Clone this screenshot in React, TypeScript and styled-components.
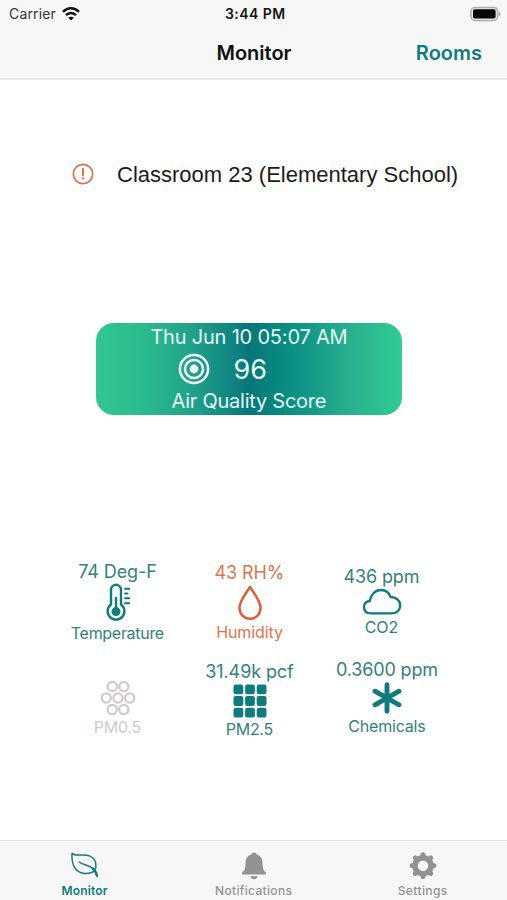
import React from 'react';
import styled, { createGlobalStyle } from 'styled-components';

const TEAL = '#107a7d';
const TEXT_TEAL = '#33817b';
const CORAL = '#dc7350';
const MUTED = '#cfcac7';
const GRAY = '#929292';

const GlobalStyle = createGlobalStyle`
  * { box-sizing: border-box; }
  body { margin: 0; background: #fff; font-family: Inter, 'Liberation Sans', sans-serif; }
  svg { display: block; flex: none; }
`;

const Screen = styled.div`
  width: 507px;
  height: 900px;
  display: flex;
  flex-direction: column;
  background: #fff;
  overflow: hidden;
`;

const Text = styled.span<{ $size: number; $track?: number; $weight?: number }>`
  font-size: ${(p) => p.$size}px;
  letter-spacing: ${(p) => p.$track ?? 0}px;
  margin-right: ${(p) => -(p.$track ?? 0)}px;
  font-weight: ${(p) => p.$weight ?? 400};
  white-space: nowrap;
`;

const Header = styled.header`
  height: 80px;
  background: #f7f7f7;
  border-bottom: 2px solid #e6e6e6;
`;

const StatusBar = styled.div`
  height: 27px;
  display: grid;
  grid-template-columns: 1fr auto 1fr;
  align-items: center;
  padding: 0 6px 0 9px;
  line-height: 27px;
  color: #161616;
`;

const Carrier = styled.div`
  display: flex;
  align-items: center;
  gap: 6px;
  color: #333;
`;

const BatterySlot = styled.div`
  display: flex;
  justify-content: flex-end;
`;

const NavBar = styled.div`
  height: 51px;
  display: grid;
  grid-template-columns: 1fr auto 1fr;
  align-items: center;
  padding: 0 25px 0 26px;
  color: #111;
`;

const RoomsButton = styled.a`
  justify-self: end;
  color: ${TEAL};
`;

const Main = styled.main`
  flex: 1;
  display: flex;
  flex-direction: column;
`;

const RoomRow = styled.div`
  margin-top: 77px;
  height: 34px;
  padding-left: 72px;
  display: flex;
  align-items: center;
  gap: 23px;
`;

const RoomName = styled(Text)`
  font-family: 'Liberation Sans', Arial, sans-serif;
  color: #1b1b1b;
  padding-top: 2px;
`;

const ScoreCard = styled.section`
  width: 306px;
  height: 92px;
  margin: 132px 0 0 96px;
  border-radius: 18px;
  background: linear-gradient(90deg, #30c690 0%, #2bbb8e 15%, #22a48b 30%, #118682 44%, #067679 50%, #099084 64%, #28ae8e 82%, #30cb94 100%);
  color: #e6f6f4;
  display: flex;
  flex-direction: column;
  align-items: center;
`;

const CardLine = styled.div`
  height: 28px;
  display: flex;
  align-items: center;
`;

const ScoreLine = styled.div`
  height: 36px;
  align-self: stretch;
  display: flex;
  align-items: center;
  gap: 24px;
  padding-left: 81.5px;
`;

const Readings = styled.section`
  margin-top: 145px;
  display: grid;
  grid-template-columns: 132px 132px 132px;
  grid-template-rows: 90px 90px;
  padding-left: 51.5px;
`;

const Tile = styled.div<{ $color: string; $top: number; $shift?: number }>`
  display: flex;
  flex-direction: column;
  align-items: center;
  padding-top: ${(p) => p.$top}px;
  padding-left: ${(p) => p.$shift ?? 0}px;
  color: ${(p) => p.$color};
`;

const Line = styled.div<{ $h: number }>`
  height: ${(p) => p.$h}px;
  display: flex;
  align-items: center;
  justify-content: center;
`;

const TabBar = styled.nav`
  height: 60px;
  background: #f7f7f7;
  border-top: 1px solid #dedede;
  display: grid;
  grid-template-columns: repeat(3, 1fr);
`;

const Tab = styled.a<{ $active?: boolean }>`
  display: flex;
  flex-direction: column;
  align-items: center;
  padding-top: 9px;
  color: ${(p) => (p.$active ? TEAL : GRAY)};
`;

const TabLabel = styled(Text)`
  line-height: 16px;
  margin-top: 3px;
`;

const Wifi = () => (
  <svg width="18" height="14" viewBox="0 0 18 14" fill="none" stroke="#111" strokeWidth="2.5">
    <path d="M1 4.8C5.5 .2 12.5 .2 17 4.8" />
    <path d="M4 8.1c2.9-2.9 7.1-2.9 10 0" />
    <path d="M9 13.6 6.2 10.8c1.5-1.5 4.1-1.5 5.6 0z" fill="#111" stroke="none" />
  </svg>
);

const Battery = () => (
  <svg width="31" height="16" viewBox="0 0 31 16">
    <rect x="1" y="1.4" width="26.6" height="13" rx="4" fill="#ececec" stroke="#adadad" strokeWidth="1.5" />
    <rect x="3" y="3.3" width="22.6" height="9.3" rx="1.8" fill="#050505" />
    <path d="M28.8 5.4c2.2 1 2.2 4 0 5z" fill="#aaa" />
  </svg>
);

const Alert = () => (
  <svg width="22" height="22" viewBox="0 0 22 22" fill="none" stroke={CORAL}>
    <circle cx="11" cy="11" r="9.7" strokeWidth="1.7" />
    <path d="M11 5.8v6.4" strokeWidth="2" strokeLinecap="round" />
    <circle cx="11" cy="15.4" r="1.15" fill={CORAL} stroke="none" />
  </svg>
);

const Target = () => (
  <svg width="32" height="32" viewBox="0 0 32 32" fill="none" stroke="#eefaf7" strokeWidth="2.5">
    <circle cx="16" cy="16" r="14.1" />
    <circle cx="16" cy="16" r="9" />
    <circle cx="16" cy="16" r="4.4" fill="#eefaf7" stroke="none" />
  </svg>
);

const Thermometer = () => (
  <svg width="40" height="40" viewBox="0 0 40 40" fill="none" stroke={TEAL}>
    <path d="M13 21.5V6.8a5 5 0 0 1 10 0v14.7a8.4 8.4 0 1 1-10 0z" strokeWidth="2.4" />
    <path d="M18 15v14" strokeWidth="2.4" strokeLinecap="round" />
    <circle cx="18" cy="28.6" r="4.5" fill={TEAL} stroke="none" />
    <path d="M27 5.8h4.3M27 10.5h2.6M27 15.2h4.3M27 20.3h4.3" strokeWidth="1.9" strokeLinecap="round" />
  </svg>
);

const Drop = () => (
  <svg width="28" height="38" viewBox="0 0 28 38" fill="none" stroke="#d8603c" strokeWidth="2.5" strokeLinejoin="round">
    <path d="M14 2.8C10.5 9 3.5 16.3 3.5 23.8c0 6.5 4.5 10.9 10.5 10.9s10.5-4.4 10.5-10.9C24.5 16.3 17.5 9 14 2.8z" />
  </svg>
);

const Cloud = () => (
  <svg width="40" height="28" viewBox="0 0 40 28" fill="none" stroke={TEAL} strokeWidth="2.3" strokeLinejoin="round">
    <path d="M9.2 25.3C4.3 25.3 2 22.8 2 19.2c0-3.6 2.4-5.7 5.8-6.2C8.9 6.5 13.3 2 18.8 2c5 0 8.4 2.8 9.6 7 5.7.2 9.8 3.4 9.8 8.2 0 5-3.3 8.1-8.5 8.1z" />
  </svg>
);

const Cells = () => (
  <svg width="36" height="36" viewBox="0 0 36 36" fill="none" stroke={MUTED} strokeWidth="2.2">
    {[[12.2, 6.5], [23.8, 6.5], [6.3, 18], [18, 18], [29.7, 18], [12.2, 29.5], [23.8, 29.5]].map(([x, y]) => (
      <circle key={`${x}-${y}`} cx={x} cy={y} r="4.6" />
    ))}
  </svg>
);

const Blocks = () => (
  <svg width="34" height="34" viewBox="0 0 34 34" fill={TEAL}>
    {[0.5, 12.1, 23.7].map((y) =>
      [0.5, 12.1, 23.7].map((x) => <rect key={`${x}-${y}`} x={x} y={y} width="9.8" height="9.8" rx="2.2" />),
    )}
  </svg>
);

const Asterisk = () => (
  <svg width="32" height="34" viewBox="0 0 32 34" stroke={TEAL} strokeWidth="4.9" strokeLinecap="round">
    <path d="M16 3.8v26.4M4 10.2l24 13.6M28 10.2l-24 13.6" />
  </svg>
);

const Leaf = () => (
  <svg width="30" height="30" viewBox="0 0 30 30" fill="none" stroke={TEAL} strokeLinecap="round" strokeLinejoin="round">
    <path d="M2 3.4C6.2 7.2 13 3.2 20 6.1c6 2.6 7.3 9.2 4.7 15C17.6 25 9.6 24.2 5.2 18.5 1.9 14 1.7 8.5 2 3.4z" strokeWidth="1.5" />
    <path d="M9.3 12c4.5 3.7 9.7 2.6 14.3 7.2" strokeWidth="1.6" />
    <path d="M23 18.7c2 2.2 3.5 4.4 4 7" strokeWidth="2.5" />
  </svg>
);

const Bell = () => (
  <svg width="30" height="30" viewBox="0 0 30 30" fill={GRAY}>
    <path d="M15 2.5c-1.5 0-2.4.8-2.7 2C8.4 5.6 6.5 9 6.5 13c0 5.8-1 7.3-3 9.2-1 .9-.8 2.3.6 2.3h21.8c1.4 0 1.6-1.4.6-2.3-2-1.9-3-3.4-3-9.2 0-4-1.9-7.4-5.8-8.5-.3-1.2-1.2-2-2.7-2z" />
    <path d="M11.3 26.3h7.4c-.6 1.9-1.9 2.9-3.7 2.9s-3.1-1-3.7-2.9z" />
  </svg>
);

const Gear = () => (
  <svg width="30" height="30" viewBox="0 0 30 30" fill="none" stroke={GRAY}>
    <circle cx="15" cy="15.7" r="8" strokeWidth="5.6" />
    {[0, 45, 90, 135, 180, 225, 270, 315].map((a) => (
      <path key={a} d="M15 6.2V4.6" strokeWidth="4.8" strokeLinecap="round" transform={`rotate(${a} 15 15.7)`} />
    ))}
  </svg>
);

type Reading = {
  value?: string;
  valueTrack?: number;
  label: string;
  labelTrack?: number;
  color: string;
  top: number;
  shift?: number;
  iconHeight: number;
  icon: React.ReactNode;
};

const readings: Reading[] = [
  { value: '74 Deg-F', valueTrack: -0.1, label: 'Temperature', labelTrack: -0.3, color: TEXT_TEAL, top: 0.5, iconHeight: 40, icon: <Thermometer /> },
  { value: '43 RH%', valueTrack: -0.1, label: 'Humidity', labelTrack: -0.1, color: CORAL, top: 1.5, iconHeight: 38, icon: <Drop /> },
  { value: '436 ppm', valueTrack: -0.15, label: 'CO2', color: TEXT_TEAL, top: 5.5, iconHeight: 29, icon: <Cloud /> },
  { label: 'PM0.5', labelTrack: -0.3, color: MUTED, top: 29, iconHeight: 38, icon: <Cells /> },
  { value: '31.49k pcf', valueTrack: -0.1, label: 'PM2.5', labelTrack: -0.3, color: TEXT_TEAL, top: 10.5, iconHeight: 36, icon: <Blocks /> },
  { value: '0.3600 ppm', valueTrack: -0.15, label: 'Chemicals', labelTrack: -0.2, color: TEXT_TEAL, top: 8, shift: 11, iconHeight: 36, icon: <Asterisk /> },
];

export default function App() {
  return (
    <>
      <GlobalStyle />
      <Screen>
        <Header>
          <StatusBar>
            <Carrier>
              <Text $size={14} $track={0.15}>Carrier</Text>
              <Wifi />
            </Carrier>
            <Text $size={14} $weight={600} $track={0.45}>3:44 PM</Text>
            <BatterySlot><Battery /></BatterySlot>
          </StatusBar>
          <NavBar>
            <span />
            <Text $size={20} $weight={600}>Monitor</Text>
            <RoomsButton><Text $size={20} $weight={600}>Rooms</Text></RoomsButton>
          </NavBar>
        </Header>
        <Main>
          <RoomRow>
            <Alert />
            <RoomName $size={22}>Classroom 23 (Elementary School)</RoomName>
          </RoomRow>
          <ScoreCard>
            <CardLine><Text $size={20} $track={-0.2}>Thu Jun 10 05:07 AM</Text></CardLine>
            <ScoreLine>
              <Target />
              <Text $size={27}>96</Text>
            </ScoreLine>
            <CardLine><Text $size={20} $track={-0.25}>Air Quality Score</Text></CardLine>
          </ScoreCard>
          <Readings>
            {readings.map((r) => (
              <Tile key={r.label} $color={r.color} $top={r.top} $shift={r.shift}>
                {r.value && (
                  <Line $h={22}><Text $size={18} $track={r.valueTrack}>{r.value}</Text></Line>
                )}
                <Line $h={r.iconHeight}>{r.icon}</Line>
                <Line $h={20}><Text $size={16} $track={r.labelTrack}>{r.label}</Text></Line>
              </Tile>
            ))}
          </Readings>
        </Main>
        <TabBar>
          <Tab $active>
            <Leaf />
            <TabLabel $size={12} $weight={600} $track={0.15}>Monitor</TabLabel>
          </Tab>
          <Tab>
            <Bell />
            <TabLabel $size={12} $weight={500} $track={0.33}>Notifications</TabLabel>
          </Tab>
          <Tab>
            <Gear />
            <TabLabel $size={12} $weight={500} $track={0.4}>Settings</TabLabel>
          </Tab>
        </TabBar>
      </Screen>
    </>
  );
}
